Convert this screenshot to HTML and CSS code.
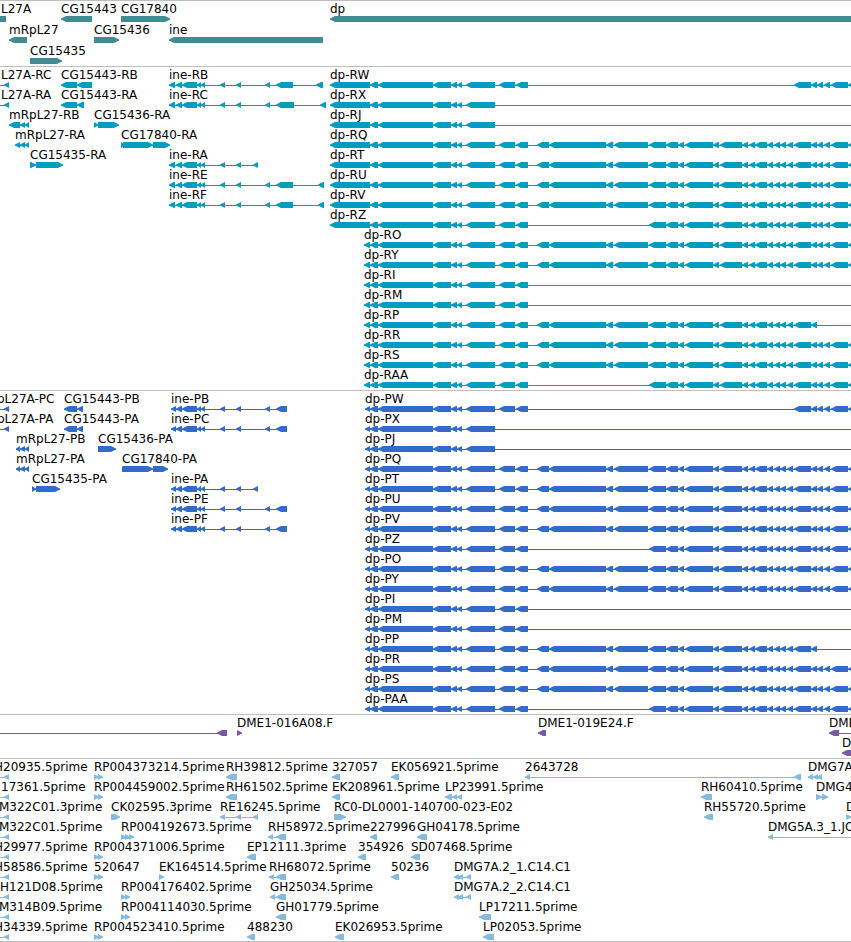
FILE: index.html
```html
<!DOCTYPE html>
<html lang="en">
<head>
<meta charset="utf-8">
<title>Genome browser</title>
<link rel="stylesheet" href="styles.css">
</head>
<body>
<main class="browser" id="browser"></main>
<script src="tracks.js"></script>
</body>
</html>
```

FILE: styles.css
```css
body {
  margin: 0;
  background: #fff;
  color: #000;
  font: 12px/14px "DejaVu Sans", sans-serif;
}

.browser {
  overflow: hidden;
  border-bottom: 1px solid #bfbfbf;
}

.track {
  display: flex;
  flex-direction: column;
  padding: 1px 0 2px;
  border-top: 1px solid #bfbfbf;
}

.track:last-child {
  padding-bottom: 1px;
}

.track-gene {
  gap: 1px;
  color: #408c92;
}

.track-transcript {
  color: #009dbf;
}

.track-protein {
  color: #316ccb;
}

.track-bac {
  color: #7759a8;
}

.track-est {
  color: #87bbdd;
}

.row {
  position: relative;
  height: 20px;
}

/* Features sit at their map coordinate along the row. */
.feature {
  position: absolute;
  top: 0;
}

.label {
  display: block;
  color: #000;
  white-space: nowrap;
}

.glyph {
  display: block;
  width: 1px;
  height: 6px;
  overflow: visible;
  fill: currentColor;
}
```

FILE: tracks.js
```js
// A feature is [label, start, strand, blocks]; a block is [from, to].
const END = [[2400, 2440]];
const EDGE = [[-20, -15]];
const HEAD = 5;

const MID = [[370, 378], [378, 433], [433, 451], [451, 457], [457, 462], [466, 495]];
const MID2 = [[499, 515], [516, 528]];
const INNER = [[537, 549], [549, 606], [606, 613], [614, 648]];
const TAIL = [[649, 666], [666, 678], [678, 684], [685, 713], [713, 719], [720, 742],
  [742, 748], [749, 755], [755, 767], [767, 773], [774, 780], [780, 786], [787, 793]];
const LAST = [[794, 811], [811, 817]];
const LAST2 = [[817, 823], [824, 830], [831, 848], [848, 854]];

const BODY = {
  full: [...MID, ...MID2, ...INNER, ...TAIL, ...LAST, ...LAST2, ...END],
  noInner: [...MID, ...MID2, ...TAIL, ...LAST, ...LAST2, ...END],
  far: [...MID, ...MID2, ...LAST, ...LAST2, ...END],
  short: [...MID, ...END],
  mid: [...MID, ...MID2, ...END],
  early: [...MID, ...MID2, ...INNER, ...TAIL, ...LAST, ...END]
};

const dp = (name, start, kind) => ["dp-" + name, start, "-", [[start, 370], ...BODY[kind]]];

const ine = (name, start, ends) => ["ine-" + name, start, "-",
  [[start, start < 171 ? 175 : 176], [176, 182], [182, 197], [197, 201], [201, 205],
    [220, 225], [236, 241], ...ends]];

const left = (label, start) => [label, start, "-", [...EDGE, [4, 9]]];
const one = (label, from, to, strand = "-") => [label, from, strand, [[from, to]]];
const pair = (label, x) => [label, x, "+", [[x, x + 5], [x + 4, x + 9]]];

const tracks = [
  ["gene", [
    [["L27A", 1, "+", [[-20, -9], [-9, 6]], true], one("CG15443", 61, 92), one("CG17840", 121, 170, "+"), one("dp", 330, 2400)],
    [one("mRpL27", 9, 27), one("CG15436", 94, 119, "+"), one("ine", 169, 323)],
    [one("CG15435", 30, 62, "+")]
  ]],
  ["transcript", [
    [left("L27A-RC", 1), ["CG15443-RB", 61, "-", [[61, 77], [77, 92]]], ine("RB", 169, [[265, 270], [276, 293], [316, 323]]), dp("RW", 330, "far")],
    [left("L27A-RA", 1), ["CG15443-RA", 61, "-", [[61, 77], [77, 84]]], ine("RC", 169, [[265, 270], [276, 294], [320, 326]]), dp("RX", 330, "short")],
    [["mRpL27-RB", 9, "-", [[9, 20], [20, 25], [25, 29]]], ["CG15436-RA", 94, "+", [[94, 98], [98, 119]]], dp("RJ", 330, "short")],
    [["mRpL27-RA", 15, "-", [[15, 20], [20, 25], [25, 29]]], ["CG17840-RA", 121, "+", [[121, 124], [123, 153], [153, 170]]], dp("RQ", 330, "full")],
    [["CG15435-RA", 30, "+", [[30, 36], [36, 63]]], ine("RA", 169, [[253, 258]]), dp("RT", 330, "full")],
    [ine("RE", 169, [[265, 270], [276, 293], [318, 324]]), dp("RU", 330, "full")],
    [ine("RF", 169, [[265, 270], [276, 293], [318, 324]]), dp("RV", 330, "full")],
    [dp("RZ", 330, "noInner")],
    [dp("RO", 364, "full")],
    [dp("RY", 364, "full")],
    [dp("RI", 364, "mid")],
    [dp("RM", 364, "mid")],
    [dp("RP", 364, "early")],
    [dp("RR", 364, "full")],
    [dp("RS", 364, "full")],
    [dp("RAA", 364, "noInner")]
  ]],
  ["protein", [
    [left("pL27A-PC", -3), ["CG15443-PB", 64, "-", [[64, 77], [77, 83]]], ine("PB", 171, [[265, 270], [276, 287]]), dp("PW", 365, "far")],
    [left("pL27A-PA", -3), ["CG15443-PA", 64, "-", [[64, 77], [77, 83]]], ine("PC", 171, [[265, 270], [276, 287]]), dp("PX", 365, "short")],
    [["mRpL27-PB", 16, "-", [[16, 20], [20, 25], [25, 29]]], one("CG15436-PA", 98, 116, "+"), dp("PJ", 365, "short")],
    [["mRpL27-PA", 16, "-", [[16, 20], [20, 25], [25, 29]]], ["CG17840-PA", 122, "+", [[122, 125], [123, 153], [153, 168]]], dp("PQ", 365, "full")],
    [["CG15435-PA", 32, "+", [[32, 36], [36, 60]]], ine("PA", 171, [[253, 258]]), dp("PT", 365, "full")],
    [ine("PE", 171, [[265, 270], [276, 287]]), dp("PU", 365, "full")],
    [ine("PF", 171, [[265, 270], [276, 287]]), dp("PV", 365, "full")],
    [dp("PZ", 365, "noInner")],
    [dp("PO", 365, "full")],
    [dp("PY", 365, "full")],
    [dp("PI", 365, "mid")],
    [dp("PM", 365, "mid")],
    [dp("PP", 365, "early")],
    [dp("PR", 365, "full")],
    [dp("PS", 365, "full")],
    [dp("PAA", 365, "noInner")]
  ]],
  ["bac", [
    [["", -20, "-", [...EDGE, [217, 227]]], one("DME1-016A08.F", 237, 242, "+"), one("DME1-019E24.F", 538, 546), ["DME", 829, "-", [[829, 839], ...END]]],
    [["D", 842, "-", [[842, 860]]]]
  ]],
  ["est", [
    [left("H20935.5prime", -6), pair("RP004373214.5prime", 94), one("RH39812.5prime", 226, 237), one("327057", 332, 340), one("EK056921.5prime", 391, 399), ["2643728", 525, "-", [[525, 530], [794, 801]]], ["DMG7A", 808, "-", [[808, 813], [813, 818], [817, 822]]]],
    [left("17361.5prime", 1), pair("RP004459002.5prime", 94), one("RH61502.5prime", 226, 237), one("EK208961.5prime", 332, 340), ["LP23991.5prime", 445, "-", [[445, 452], [452, 457], [457, 462]]], one("RH60410.5prime", 701, 712), ["DMG4", 816, "+", [[816, 822], [822, 828]]]],
    [left("M322C01.3prime", -1), one("CK02595.3prime", 111, 120, "+"), ["RE16245.5prime", 220, "-", [[220, 225], [236, 241], [253, 258]]], one("RC0-DL0001-140700-023-E02", 334, 346, "+"), one("RH55720.5prime", 704, 713), ["D", 846, "+", [[846, 851], [851, 856]]]],
    [left("M322C01.5prime", -1), ["RP004192673.5prime", 121, "+", [[121, 126], [125, 130], [129, 134]]], ["RH58972.5prime", 268, "-", [[268, 273], [276, 286]]], one("227996", 370, 377), one("GH04178.5prime", 417, 427), ["DMG5A.3_1.JO", 768, "-", [[768, 773], ...END]]],
    [left("H29977.5prime", -6), pair("RP004371006.5prime", 94), one("EP12111.3prime", 247, 256), one("354926", 358, 366), one("SD07468.5prime", 411, 420)],
    [left("H58586.5prime", -6), pair("520647", 94), one("EK164514.5prime", 159, 164, "+"), ["RH68072.5prime", 269, "-", [[269, 274], [276, 286]]], one("50236", 391, 399), ["DMG7A.2_1.C14.C1", 454, "-", [[454, 459], [458, 463], [466, 471]]]],
    [left("H121D08.5prime", 0), pair("RP004176402.5prime", 121), ["GH25034.5prime", 270, "-", [[270, 275], [276, 286]]], ["DMG7A.2_2.C14.C1", 454, "-", [[454, 459], [458, 463], [466, 471]]]],
    [left("M314B09.5prime", -1), pair("RP004114030.5prime", 121), one("GH01779.5prime", 276, 286), one("LP17211.5prime", 479, 491)],
    [left("H34339.5prime", -6), pair("RP004523410.5prime", 94), one("488230", 247, 255), one("EK026953.5prime", 335, 344), one("LP02053.5prime", 483, 494)]
  ]]
];

// Block outline with an arrow head on the side the strand points to.
function blockPath(from, to, strand, flat) {
  const head = flat ? 0 : Math.min(HEAD, to - from);
  return strand === "-"
    ? `M${from} 3.5V2.5L${from + head} 0H${to}V6H${from + head}Z`
    : `M${to} 3.5V2.5L${to - head} 0H${from}V6H${to - head}Z`;
}

function featureMarkup([label, start, strand, blocks, flat]) {
  const local = blocks.map(([from, to]) => [from - start, to - start]);
  const from = local[0][0];
  const to = local[local.length - 1][1];
  const shapes = local.map(([a, b]) => blockPath(a, b, strand, flat)).join("");
  return `<div class="feature" style="left:${start}px">` +
    `<span class="label">${label || "&nbsp;"}</span>` +
    `<svg class="glyph" aria-hidden="true"><path d="M${from} 3H${to}V4H${from}Z"/><path d="${shapes}"/></svg></div>`;
}

document.getElementById("browser").innerHTML = tracks.map(([kind, rows]) =>
  `<section class="track track-${kind}">` +
  rows.map(row => `<div class="row">${row.map(featureMarkup).join("")}</div>`).join("") +
  "</section>").join("");
```
